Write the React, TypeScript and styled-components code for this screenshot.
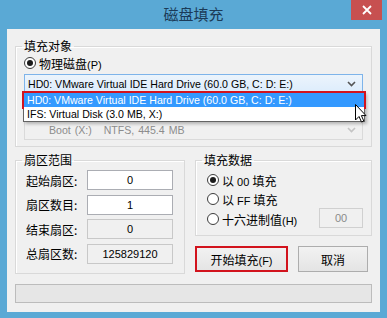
import React from 'react';
import styled, { createGlobalStyle } from 'styled-components';

const GlobalStyle = createGlobalStyle`
  html, body {
    margin: 0;
    padding: 0;
    background: #5aa9d5;
  }
  body {
    font-family: "Liberation Sans", "Noto Sans CJK SC", sans-serif;
  }
`;

const LATIN = `"Liberation Sans", "Noto Sans CJK SC", sans-serif`;
const CJK = `"Noto Sans CJK SC", sans-serif`;

const Window = styled.div`
  width: 387px;
  height: 318px;
  background: #5aa9d5;
  display: flex;
  flex-direction: column;
  overflow: hidden;
`;

const TitleBar = styled.div`
  height: 29px;
  position: relative;
  display: flex;
  align-items: center;
  justify-content: center;
`;

const Title = styled.div`
  font: 15px ${CJK};
  color: #1b3b58;
  margin-top: -2px;
`;

const CloseButton = styled.div`
  position: absolute;
  top: 0;
  right: 5px;
  width: 31px;
  height: 20px;
  background: #c75050;
  display: flex;
  align-items: center;
  justify-content: center;
`;

const Client = styled.div`
  margin: 0 7px;
  height: 283px;
  background: #f0f0f0;
  box-sizing: border-box;
  padding: 10px 8px 0 8px;
  display: flex;
  flex-direction: column;
  position: relative;
  font: 12px ${CJK};
  color: #000;
`;

const Group = styled.fieldset<{ $h: number }>`
  margin: 0;
  padding: 0;
  border: 1px solid #d9d9d9;
  box-shadow: inset 1px 1px 0 #fff;
  height: ${(p) => p.$h}px;
  box-sizing: border-box;
  min-width: 0;
`;

const Legend = styled.legend<{ $offset: number }>`
  margin-left: ${(p) => p.$offset}px;
  padding: 0 2px;
  font: 12px ${CJK};
  line-height: 14px;
`;

const TargetBody = styled.div`
  padding: 2px 8px 0 8px;
  display: flex;
  flex-direction: column;
`;

const RadioRow = styled.div`
  display: flex;
  align-items: center;
  height: 16px;
  gap: 3px;
  font: 12px ${CJK};
`;

const RadioDot = styled.span<{ $on?: boolean }>`
  width: 12px;
  height: 12px;
  box-sizing: border-box;
  border-radius: 50%;
  border: 1px solid #3c3c3c;
  background: #fff;
  display: inline-flex;
  align-items: center;
  justify-content: center;
  flex: none;
  &::after {
    content: '';
    width: 6px;
    height: 6px;
    border-radius: 50%;
    background: #1b1b1b;
    display: ${(p) => (p.$on ? 'block' : 'none')};
  }
`;

const Latin = styled.span`
  font: 11px ${LATIN};
`;

const Combo = styled.div<{ $disabled?: boolean }>`
  height: 20px;
  box-sizing: border-box;
  border: 1px solid ${(p) => (p.$disabled ? '#dadada' : '#7eb4ea')};
  background: ${(p) =>
    p.$disabled ? '#f0f0f0' : 'linear-gradient(#ecf4fc, #dcecfc)'};
  color: ${(p) => (p.$disabled ? '#8c8c8c' : '#000')};
  display: flex;
  align-items: center;
  padding: 0 6px 0 3px;
  font: 10.6px ${LATIN};
  white-space: nowrap;
`;

const ComboText = styled.span<{ $pad?: number }>`
  flex: 1;
  overflow: hidden;
  padding-left: ${(p) => p.$pad ?? 0}px;
  word-spacing: ${(p) => (p.$pad ? 1 : 0)}px;
`;

const DropList = styled.div`
  position: absolute;
  left: 16px;
  top: 63px;
  width: 340px;
  background: #fff;
  border: 1px solid #646464;
  box-shadow: 2px 2px 3px rgba(0, 0, 0, 0.25);
  font: 10.6px ${LATIN};
  z-index: 2;
`;

const DropItem = styled.div<{ $active?: boolean }>`
  height: 14px;
  line-height: 14px;
  padding: 0 3px;
  white-space: nowrap;
  background: ${(p) => (p.$active ? '#3399ff' : '#fff')};
  color: ${(p) => (p.$active ? '#fff' : '#000')};
  box-shadow: ${(p) => (p.$active ? '0 0 0 2px #d2131d' : 'none')};
  position: relative;
`;

const Cursor = styled.svg`
  position: absolute;
  left: 348px;
  top: 75px;
  z-index: 3;
`;

const Middle = styled.div`
  display: flex;
  gap: 10px;
  margin-top: 6px;
`;

const SectorBody = styled.div`
  display: grid;
  grid-template-columns: 1fr 86px;
  row-gap: 4.5px;
  align-items: center;
  padding: 3px 11px 0 10px;
`;

const FieldLabel = styled.span`
  font: 12px ${CJK};
`;

const NumBox = styled.div<{ $readonly?: boolean }>`
  height: 20px;
  box-sizing: border-box;
  border: 1px solid ${(p) => (p.$readonly ? '#c8c8c8' : '#abadb3')};
  background: ${(p) => (p.$readonly ? '#f0f0f0' : '#fff')};
  display: flex;
  align-items: center;
  justify-content: center;
  font: 11px ${LATIN};
  color: #000;
`;

const RightCol = styled.div`
  flex: 1;
  display: flex;
  flex-direction: column;
`;

const FillBody = styled.div`
  padding: 5px 8px 0 11px;
  display: flex;
  flex-direction: column;
  gap: 3px;
`;

const HexRow = styled.div`
  display: flex;
  align-items: center;
  justify-content: space-between;
`;

const HexBox = styled.div`
  width: 44px;
  height: 20px;
  box-sizing: border-box;
  border: 1px solid #d0d0d0;
  background: #f0f0f0;
  color: #8a8a8a;
  display: flex;
  align-items: center;
  justify-content: center;
  font: 11px ${LATIN};
  margin-top: -2px;
`;

const ButtonRow = styled.div`
  display: flex;
  justify-content: space-between;
  margin-top: 10px;
  padding-right: 4px;
`;

const Button = styled.div<{ $w: number; $mark?: boolean }>`
  width: ${(p) => p.$w}px;
  height: 26px;
  box-sizing: border-box;
  border: 1px solid #adadad;
  background: linear-gradient(#f2f2f2, #e4e4e4);
  display: flex;
  align-items: center;
  justify-content: center;
  font: 12px ${CJK};
  outline: ${(p) => (p.$mark ? '2px solid #d2131d' : 'none')};
  outline-offset: -2px;
  padding-top: 1px;
`;

const Progress = styled.div`
  margin-top: 10px;
  height: 19px;
  box-sizing: border-box;
  border: 1px solid #bcbcbc;
  background: #e6e6e6;
`;

const Chevron = ({ color }: { color: string }) => (
  <svg width="9" height="6" viewBox="0 0 9 6">
    <path d="M1 1 L4.5 4.5 L8 1" stroke={color} strokeWidth="1.6" fill="none" />
  </svg>
);

const fillOptions = [
  { latin: ' 00 ', on: true },
  { latin: ' FF ', on: false },
];

const App = () => {
  return (
    <>
      <GlobalStyle />
      <Window>
        <TitleBar>
          <Title>磁盘填充</Title>
          <CloseButton>
            <svg width="10" height="10" viewBox="0 0 10 10">
              <path d="M1 1 L9 9 M9 1 L1 9" stroke="#fff" strokeWidth="1.8" />
            </svg>
          </CloseButton>
        </TitleBar>
        <Client>
          <Group $h={108}>
            <Legend $offset={6}>填充对象</Legend>
            <TargetBody>
              <RadioRow>
                <RadioDot $on />
                <span>
                  物理磁盘<Latin>(P)</Latin>
                </span>
              </RadioRow>
              <Combo style={{ marginTop: 3 }}>
                <ComboText>HD0: VMware Virtual IDE Hard Drive (60.0 GB, C: D: E:)</ComboText>
                <Chevron color="#555" />
              </Combo>
              <Combo $disabled style={{ marginTop: 26 }}>
                <ComboText $pad={21}>Boot (X:)&nbsp;&nbsp;&nbsp;NTFS, 445.4 MB</ComboText>
                <Chevron color="#c4c4c4" />
              </Combo>
            </TargetBody>
          </Group>

          <DropList>
            <DropItem $active>HD0: VMware Virtual IDE Hard Drive (60.0 GB, C: D: E:)</DropItem>
            <DropItem>IFS: Virtual Disk (3.0 MB, X:)</DropItem>
          </DropList>
          <Cursor width="12" height="19" viewBox="0 0 12 19">
            <path
              d="M0.5 0.5 L0.5 16 L4 12.5 L6.5 18 L8.8 17 L6.4 11.6 L11 11.6 Z"
              fill="#fff"
              stroke="#000"
              strokeWidth="1"
              strokeLinejoin="round"
            />
          </Cursor>

          <Middle>
            <Group $h={121} style={{ width: 170 }}>
              <Legend $offset={6}>扇区范围</Legend>
              <SectorBody>
                <FieldLabel>起始扇区:</FieldLabel>
                <NumBox>0</NumBox>
                <FieldLabel>扇区数目:</FieldLabel>
                <NumBox>1</NumBox>
                <FieldLabel>结束扇区:</FieldLabel>
                <NumBox $readonly>0</NumBox>
                <FieldLabel>总扇区数:</FieldLabel>
                <NumBox $readonly>125829120</NumBox>
              </SectorBody>
            </Group>
            <RightCol>
              <Group $h={83}>
                <Legend $offset={6}>填充数据</Legend>
                <FillBody>
                  {fillOptions.map((o) => (
                    <RadioRow key={o.latin}>
                      <RadioDot $on={o.on} />
                      <span>
                        以<Latin>{o.latin}</Latin>填充
                      </span>
                    </RadioRow>
                  ))}
                  <HexRow>
                    <RadioRow>
                      <RadioDot />
                      <span>
                        十六进制值<Latin>(H)</Latin>
                      </span>
                    </RadioRow>
                    <HexBox>00</HexBox>
                  </HexRow>
                </FillBody>
              </Group>
              <ButtonRow>
                <Button $w={93} $mark>
                  <span>
                    开始填充<Latin>(F)</Latin>
                  </span>
                </Button>
                <Button $w={70}>取消</Button>
              </ButtonRow>
            </RightCol>
          </Middle>
          <Progress />
        </Client>
      </Window>
    </>
  );
};

export default App;
